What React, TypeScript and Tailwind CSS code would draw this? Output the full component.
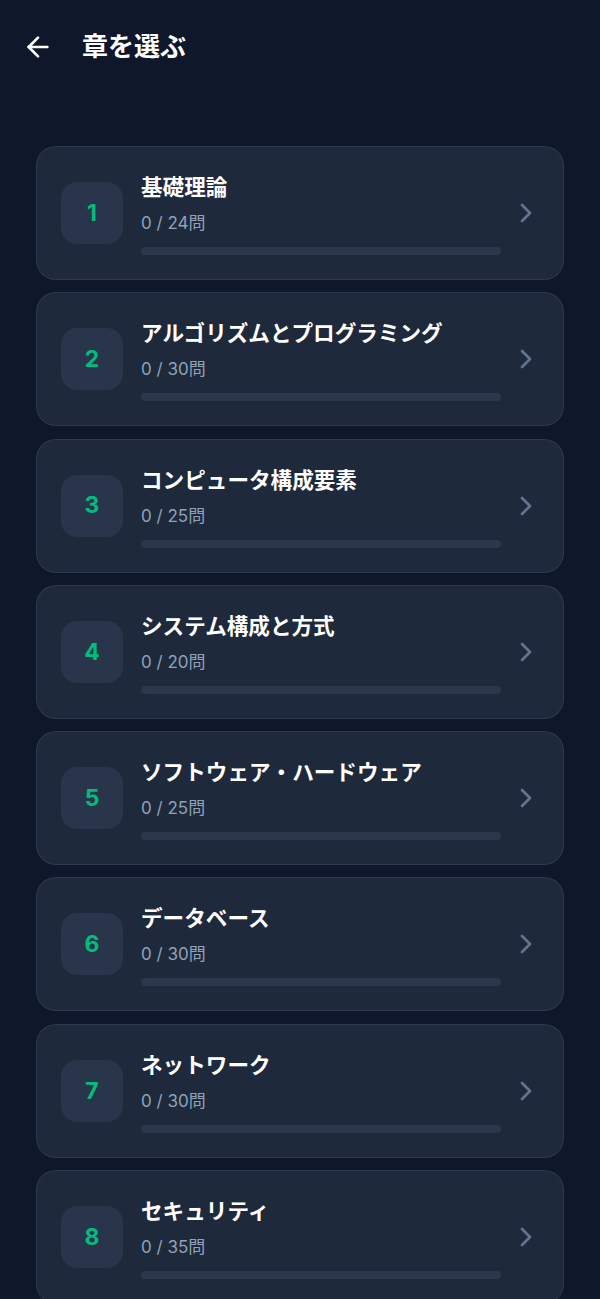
import { ArrowLeft, ChevronRight } from 'lucide-react';

type Chapter = { id: number; title: string; done: number; total: number };

const chapters: Chapter[] = [
  { id: 1, title: '基礎理論', done: 0, total: 24 },
  { id: 2, title: 'アルゴリズムとプログラミング', done: 0, total: 30 },
  { id: 3, title: 'コンピュータ構成要素', done: 0, total: 25 },
  { id: 4, title: 'システム構成と方式', done: 0, total: 20 },
  { id: 5, title: 'ソフトウェア・ハードウェア', done: 0, total: 25 },
  { id: 6, title: 'データベース', done: 0, total: 30 },
  { id: 7, title: 'ネットワーク', done: 0, total: 30 },
  { id: 8, title: 'セキュリティ', done: 0, total: 35 },
];

function ChapterCard({ chapter }: { chapter: Chapter }) {
  const pct = chapter.total ? (chapter.done / chapter.total) * 100 : 0;
  return (
    <button className="w-full flex items-center text-left rounded-[20px] border border-slate-700/70 bg-[#1e293b] py-6 pl-6 pr-[21px]">
      <div className="w-[62px] h-[62px] shrink-0 rounded-2xl bg-[#29354a] flex items-center justify-center">
        <span className="text-[23px] font-bold text-emerald-500">{chapter.id}</span>
      </div>
      <div className="flex-1 min-w-0 ml-[18px]">
        <div className="text-[21.6px] leading-[33px] font-bold text-white truncate">{chapter.title}</div>
        <div className="mt-[7px] text-[17px] leading-[25px] text-slate-400">
          {chapter.done} / {chapter.total}問
        </div>
        <div className="mt-[11px] h-2 rounded-full bg-[#2b374b] overflow-hidden">
          <div className="h-full bg-emerald-500" style={{ width: `${pct}%` }} />
        </div>
      </div>
      <ChevronRight className="w-8 h-8 shrink-0 ml-[9px] text-slate-500" strokeWidth={2} />
    </button>
  );
}

export default function App() {
  return (
    <div
      className="min-h-screen bg-[#0f172a]"
      style={{ fontFamily: 'Inter, "Noto Sans CJK JP", sans-serif' }}
    >
      <div className="flex items-center gap-7 px-[22px] pt-[31px]">
        <button className="w-8 h-8 flex items-center justify-center text-white">
          <ArrowLeft className="w-8 h-8" strokeWidth={2} />
        </button>
        <h1 className="text-[26px] leading-8 font-bold text-white">章を選ぶ</h1>
      </div>
      <div className="mt-[83px] px-9 flex flex-col gap-[12.3px] pb-8">
        {chapters.map((c) => (
          <ChapterCard key={c.id} chapter={c} />
        ))}
      </div>
    </div>
  );
}
